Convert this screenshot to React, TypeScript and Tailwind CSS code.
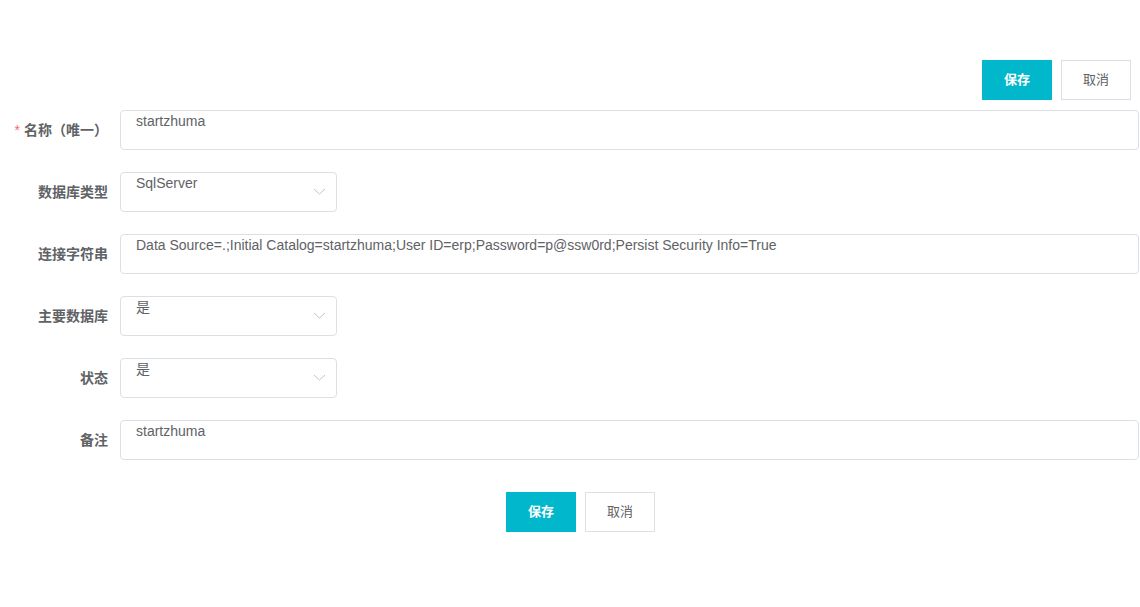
import React from 'react';

const font = { fontFamily: '"Liberation Sans", "Noto Sans CJK SC", sans-serif' };

const Chevron = () => (
  <svg width="13" height="12" viewBox="0 0 13 12" className="text-[#c0c4cc]">
    <path d="M1 4 L6.5 9 L12 4" fill="none" stroke="currentColor" strokeWidth="1" />
  </svg>
);

const Field: React.FC<{ label: string; required?: boolean; children: React.ReactNode }> = ({ label, required, children }) => (
  <div className="flex items-center mb-[22px]">
    <label className="w-[120px] shrink-0 pr-3 text-right text-sm font-bold text-[#606266] whitespace-nowrap">
      {required && <span className="text-[#f56c6c] font-normal mr-1">*</span>}
      {label}
    </label>
    {children}
  </div>
);

const TextBox: React.FC<{ value: string }> = ({ value }) => (
  <div className="flex-1 h-10 border border-[#dcdfe6] rounded bg-white px-[15px] pt-0 text-sm text-[#606266] whitespace-nowrap overflow-hidden">
    {value}
  </div>
);

const SelectBox: React.FC<{ value: string }> = ({ value }) => (
  <div className="w-[217px] h-10 border border-[#dcdfe6] rounded bg-white pl-[15px] pr-[10px] text-sm text-[#606266] flex items-start justify-between">
    <span>{value}</span>
    <span className="mt-[12px]"><Chevron /></span>
  </div>
);

const Buttons = () => (
  <div className="flex gap-[9px]">
    <button className="w-[70px] h-10 bg-[#00b7cb] text-white text-[13px] font-bold">保存</button>
    <button className="w-[70px] h-10 bg-white border border-[#dcdfe6] text-[#606266] text-[13px]">取消</button>
  </div>
);

const App: React.FC = () => {
  return (
    <div className="min-h-screen bg-white" style={font}>
      <div className="pt-[60px] pr-[9px] flex justify-end">
        <Buttons />
      </div>
      <div className="pt-[10px] pr-px">
        <Field label="名称（唯一）" required>
          <TextBox value="startzhuma" />
        </Field>
        <Field label="数据库类型">
          <SelectBox value="SqlServer" />
        </Field>
        <Field label="连接字符串">
          <TextBox value="Data Source=.;Initial Catalog=startzhuma;User ID=erp;Password=p@ssw0rd;Persist Security Info=True" />
        </Field>
        <Field label="主要数据库">
          <SelectBox value="是" />
        </Field>
        <Field label="状态">
          <SelectBox value="是" />
        </Field>
        <Field label="备注">
          <TextBox value="startzhuma" />
        </Field>
        <div className="flex pl-[506px] mt-[32px]">
          <Buttons />
        </div>
      </div>
    </div>
  );
};

export default App;
